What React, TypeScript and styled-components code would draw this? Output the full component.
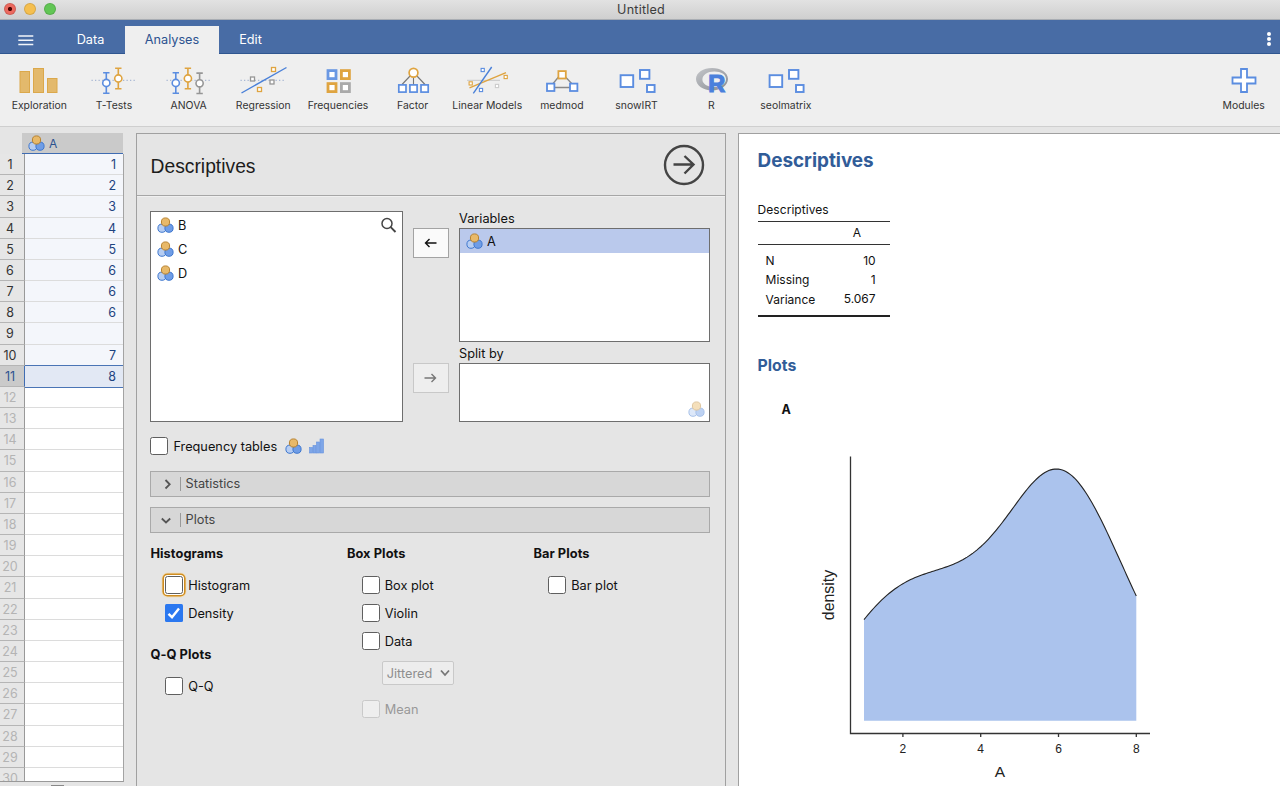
import React from "react";
import styled, { createGlobalStyle, css } from "styled-components";

const BLUE = "#5b8de0";
const GOLD = "#dfa440";
const GREY = "#969696";

const Global = createGlobalStyle`
  * { box-sizing: border-box; }
  html, body { margin: 0; padding: 0; overflow: hidden; }
  body { font-family: Inter, "Liberation Sans", sans-serif; font-size: 13px; color: #111; }
  svg { display: block; flex: none; }
`;

const Window = styled.div`
  width: 1280px;
  height: 786px;
  display: flex;
  flex-direction: column;
  overflow: hidden;
  background: #e5e5e5;
`;

const TitleBar = styled.header`
  height: 20px;
  flex: none;
  display: grid;
  grid-template-columns: 100px 1fr 98px;
  background: linear-gradient(#e2e2e2, #cfcfcf);
  border-bottom: 1px solid #a9adb3;
`;
const Lights = styled.div`
  display: flex;
  gap: 8px;
  padding: 3px 0 0 4px;
`;
const Light = styled.span<{ $fill: string; $dot?: boolean }>`
  width: 12px;
  height: 12px;
  border-radius: 50%;
  border: 1px solid rgba(0, 0, 0, 0.12);
  background: ${(p) => (p.$dot ? `radial-gradient(circle, #4a0704 0 1.8px, ${p.$fill} 2.4px)` : p.$fill)};
`;
const WindowTitle = styled.div`
  text-align: center;
  line-height: 19px;
  font-size: 12.6px;
  letter-spacing: 0.2px;
  color: #3c3c3c;
`;

const TabBar = styled.nav`
  height: 34px;
  flex: none;
  display: flex;
  align-items: stretch;
  background: #486ca5;
  box-shadow: inset 0 -1px #2f5690;
`;
const MenuButton = styled.div`
  width: 56px;
  padding: 15px 0 0 18px;
`;
const Tab = styled.div<{ $width: number; $active?: boolean }>`
  width: ${(p) => p.$width}px;
  margin-top: 6px;
  text-align: center;
  line-height: 28px;
  font-size: 12.7px;
  color: #fff;
  ${(p) =>
    p.$active &&
    css`
      background: #efefef;
      color: #2d5390;
    `}
`;
const Kebab = styled.div`
  margin: 12px 9px 0 auto;
  display: flex;
  flex-direction: column;
  gap: 1px;
  span {
    width: 4px;
    height: 4px;
    border-radius: 50%;
    background: #fff;
  }
`;

const Ribbon = styled.div`
  height: 73px;
  flex: none;
  display: flex;
  padding: 10px 0 0 2px;
  background: #efefef;
  border-bottom: 1px solid #cfcfcf;
`;
const RibbonItem = styled.div<{ $end?: boolean }>`
  width: 74.67px;
  display: flex;
  flex-direction: column;
  align-items: center;
  font-size: 10.4px;
  line-height: 16px;
  letter-spacing: 0.03px;
  white-space: nowrap;
  color: #333;
  ${(p) =>
    p.$end &&
    css`
      margin-left: auto;
      margin-right: -1px;
    `}
`;

const Main = styled.main`
  flex: 1;
  min-height: 0;
  display: flex;
`;

const Sheet = styled.section`
  width: 136px;
  flex: none;
  display: flex;
  flex-direction: column;
  padding-top: 6px;
`;
const ColumnHead = styled.div`
  margin-left: 22px;
  width: 101px;
  height: 21px;
  flex: none;
  display: flex;
  align-items: center;
  gap: 4px;
  padding-left: 6px;
  background: #cacaca;
  border-bottom: 1px solid #3f6cb2;
  color: #2d5390;
  font-size: 12px;
`;
const Rows = styled.div`
  width: 124px;
  height: 628px;
  flex: none;
  overflow: hidden;
  border-right: 1px solid #a3a3a3;
  border-bottom: 1px solid #999;
`;
type CellState = "filled" | "selected" | "empty";
const Row = styled.div`
  height: 21.18px;
  display: flex;
`;
const RowNumber = styled.div<{ $state: CellState }>`
  width: 25px;
  padding-right: 4px;
  border-right: 1px solid #999;
  border-bottom: 1px solid #b5b5b5;
  text-align: center;
  line-height: 22px;
  font-size: 12.5px;
  background: ${(p) => (p.$state === "selected" ? "#cacaca" : "#e6e6e6")};
  color: ${(p) => ({ filled: "#333", selected: "#2d5390", empty: "#b4b4b4" })[p.$state]};
  border-right-color: ${(p) => (p.$state === "selected" ? "#3f6cb2" : "#999")};
`;
const Cell = styled.div<{ $state: CellState }>`
  flex: 1;
  padding-right: 7px;
  text-align: right;
  line-height: 22px;
  font-size: 12.5px;
  color: #1d4380;
  border-bottom: 1px solid #dcdcdc;
  background: ${(p) => ({ filled: "#f4f6fb", selected: "#e2e8f4", empty: "#fff" })[p.$state]};
  ${(p) =>
    p.$state === "selected" &&
    css`
      position: relative;
      z-index: 1;
      border-bottom: 0;
      box-shadow: 0 -1px #4a74b5, 0 1px #4a74b5;
    `}
`;
const ScrollThumb = styled.div`
  margin: 3px 0 0 51px;
  width: 13px;
  height: 2px;
  background: #888;
`;

const Options = styled.section`
  width: 590px;
  flex: none;
  margin-top: 6px;
  border: 1px solid #a0a0a0;
  border-bottom: 0;
`;
const OptionsHead = styled.div`
  height: 62px;
  display: flex;
  justify-content: space-between;
  align-items: center;
  padding: 1px 20px 0 13.5px;
  border-bottom: 1px solid #a6a6a6;
  box-shadow: 0 1px #f0f0f0;
`;
const OptionsTitle = styled.h1`
  margin: 0;
  padding-top: 3px;
  font: 400 19.3px "Liberation Sans", sans-serif;
  color: #1c1c1c;
`;
const Form = styled.div`
  padding: 15px 15px 0 13px;
  font-size: 12.75px;
`;
const Supplier = styled.div`
  height: 211px;
  display: grid;
  grid-template-columns: 253px 36px 251px;
  column-gap: 10px;
`;
const ListBox = styled.div<{ $height: number; $pad?: number }>`
  height: ${(p) => p.$height}px;
  padding-top: ${(p) => p.$pad ?? 0}px;
  border: 1px solid #6e6e6e;
  background: #fff;
  position: relative;
`;
const Variable = styled.div<{ $selected?: boolean }>`
  height: 24.2px;
  display: flex;
  align-items: center;
  gap: 4.5px;
  padding-left: 5.5px;
  background: ${(p) => (p.$selected ? "#bac9ec" : "transparent")};
`;
const SearchCorner = styled.div`
  position: absolute;
  top: 5px;
  right: 5px;
`;
const TypeCorner = styled.div`
  position: absolute;
  right: 4px;
  bottom: 3px;
  opacity: 0.45;
`;
const ButtonColumn = styled.div`
  display: flex;
  flex-direction: column;
  gap: 105px;
  padding-top: 17px;
`;
const MoveButton = styled.div<{ $disabled?: boolean }>`
  height: 30px;
  display: flex;
  align-items: center;
  justify-content: center;
  border: 1px solid ${(p) => (p.$disabled ? "#c8c8c8" : "#a3a3a3")};
  background: ${(p) => (p.$disabled ? "#eee" : "#fafafa")};
  color: ${(p) => (p.$disabled ? "#777" : "#111")};
`;
const Targets = styled.div`
  display: flex;
  flex-direction: column;
`;
const TargetLabel = styled.div<{ $height: number }>`
  height: ${(p) => p.$height}px;
  line-height: ${(p) => (p.$height > 18 ? 23 : 15)}px;
`;

const CheckRow = styled.label<{ $disabled?: boolean }>`
  height: 28.1px;
  display: flex;
  align-items: center;
  gap: 5px;
  color: ${(p) => (p.$disabled ? "#999" : "#111")};
`;
const CheckBox = styled.span<{ $checked?: boolean; $disabled?: boolean; $focus?: boolean }>`
  width: 18px;
  height: 18px;
  flex: none;
  border-radius: 2.5px;
  border: 1px solid ${(p) => (p.$disabled ? "#c9c9c9" : "#5f5f5f")};
  background: ${(p) => (p.$disabled ? "#eee" : "#fff")};
  ${(p) =>
    p.$checked &&
    css`
      border: 0;
      border-radius: 1.5px;
      background: #2b78f0;
    `}
  ${(p) =>
    p.$focus &&
    css`
      box-shadow: 0 0 0 1px #fff, 0 0 0 2.6px #cf8d20, 0 0 0 3.4px #f1dfbd;
    `}
`;
const FrequencyRow = styled.div`
  height: 49px;
  display: flex;
  align-items: center;
  padding: 0 0 1px 0.4px;
  gap: 7.4px;
`;
const Collapser = styled.div`
  height: 26px;
  margin-bottom: 10px;
  width: 560px;
  display: flex;
  align-items: center;
  padding-left: 9px;
  gap: 6px;
  border: 1px solid #a9a9a9;
  background: #d7d7d7;
  color: #444;
`;
const CollapserText = styled.span`
  border-left: 1.5px solid #999;
  padding-left: 4.5px;
  line-height: 14px;
  margin-bottom: 1px;
`;
const PlotOptions = styled.div`
  display: grid;
  grid-template-columns: 196.5px 186.5px 1fr;
  padding: 2px 0 0 0.4px;
`;
const Group = styled.div`
  padding-left: 14.8px;
`;
const GroupTitle = styled.h2`
  margin: 0;
  height: 26px;
  line-height: 16px;
  font-size: 12.8px;
  letter-spacing: 0.08px;
  font-weight: 700;
  padding-top: 1px;
`;
const GroupTitleSpaced = styled(GroupTitle)`
  margin-top: 19px;
`;
const Select = styled.div`
  margin: 6px 0 10px 20px;
  width: 72px;
  height: 24px;
  display: flex;
  align-items: center;
  justify-content: space-between;
  padding: 0 3px 0 4px;
  border: 1px solid #c9c9c9;
  border-radius: 2px;
  background: #ededed;
  color: #8e8e8e;
`;

const Results = styled.section`
  flex: 1;
  min-width: 0;
  margin: 6px 0 0 12px;
  padding: 15px 0 0 18.6px;
  border: solid #a0a0a0;
  border-width: 1px 0 0 1px;
  background: #fff;
`;
const ResultsTitle = styled.h1`
  margin: 0;
  line-height: 24px;
  font-size: 18.9px;
  font-weight: 700;
  letter-spacing: -0.02px;
  color: #315c98;
`;
const ResultTable = styled.table`
  margin-top: 30px;
  width: 132px;
  border-collapse: collapse;
  font-size: 12px;
  line-height: 14px;
  caption {
    text-align: left;
    height: 18px;
    line-height: 14px;
    letter-spacing: 0.05px;
  }
  thead th {
    height: 23px;
    font-weight: 400;
    border-top: 1.4px solid #333;
    border-bottom: 1px solid #333;
    padding: 0 7px 0 0;
  }
  tbody th {
    text-align: left;
    font-weight: 400;
    padding: 2.6px 0 2.6px 8px;
  }
  tbody td {
    text-align: right;
    padding: 2px 14px 3.2px 0;
  }
  tbody tr:first-child > * {
    padding-top: 8.6px;
  }
  tbody tr:last-child > * {
    padding-bottom: 8.4px;
  }
  tbody {
    border-bottom: 2px solid #222;
  }
`;
const PlotsTitle = styled.h2`
  margin: 39px 0 0;
  line-height: 20px;
  font-size: 15.8px;
  font-weight: 700;
  color: #315c98;
`;
const PlotName = styled.h3`
  margin: 25.5px 0 22.5px 24px;
  line-height: 18px;
  font-size: 12.5px;
  font-weight: 700;
`;
const Chart = styled.svg`
  margin: -2px 0 0 42.4px;
  text {
    font-family: "Liberation Sans", sans-serif;
    text-anchor: middle;
    fill: #222;
  }
`;

const NominalIcon = () => (
  <svg width="17" height="17" viewBox="0 0 17 17" strokeWidth="1">
    <circle cx="5" cy="11.2" r="4.1" fill="#b6cdf2" stroke="#3f78cf" />
    <circle cx="12" cy="11.2" r="4.1" fill="#6f9de6" stroke="#3f78cf" />
    <circle cx="8.5" cy="5" r="4.1" fill="#e8b969" stroke="#b8822e" />
  </svg>
);
const OrdinalIcon = () => (
  <svg width="15" height="16" viewBox="0 0 15 16" fill="#7ea6e8" stroke="#6592de" strokeWidth=".6">
    <rect x=".5" y="9.5" width="3" height="5.5" />
    <rect x="4" y="7.5" width="3" height="7.5" />
    <rect x="7.5" y="4" width="3" height="11" />
    <rect x="11" y="1" width="3.5" height="14" />
  </svg>
);

const Square = ({ x, y, s, w = 1.3, c }: { x: number; y: number; s: number; w?: number; c: string }) => (
  <rect x={x - s / 2} y={y - s / 2} width={s} height={s} fill="#fff" stroke={c} strokeWidth={w} />
);
const Whisker = ({ x, y, c }: { x: number; y: number; c: string }) => (
  <g stroke={c} strokeWidth="1.6" fill="#fff">
    <path d={`M${x} ${y - 10.2}V${y + 10.2}M${x - 3.2} ${y - 10.2}h6.4M${x - 3.2} ${y + 10.2}h6.4`} />
    <circle cx={x} cy={y} r="3.6" />
  </g>
);
const Dotted = () => <path d="M2.5 16.4H47.5" stroke="#a9b8d4" strokeWidth="1.2" strokeDasharray="1.3 2.2" />;
const Scattered = () => (
  <g fill="#fff" stroke={BLUE} strokeWidth="1.9">
    <rect x="8.6" y="11.2" width="12.6" height="11.8" />
    <rect x="28" y="6" width="9.4" height="8.8" />
    <rect x="35" y="21" width="7.6" height="7" />
  </g>
);

const icons: Record<string, React.ReactNode> = {
  Exploration: (
    <g fill="#e3b96c" stroke="#dba84b">
      <rect x="6" y="7.5" width="9.5" height="21" />
      <rect x="19.5" y="4.5" width="10" height="24" />
      <rect x="33.5" y="14.5" width="9.5" height="14" />
    </g>
  ),
  "T-Tests": (
    <>
      <Dotted />
      <Whisker x={17.3} y={19} c={BLUE} />
      <Whisker x={29.3} y={14.5} c={GOLD} />
    </>
  ),
  ANOVA: (
    <>
      <Dotted />
      <Whisker x={11.8} y={19} c={BLUE} />
      <Whisker x={23.9} y={14.5} c={GOLD} />
      <Whisker x={35.6} y={19.3} c={GREY} />
    </>
  ),
  Regression: (
    <>
      <Dotted />
      <path d="M3.5 29L48.5 3.5" stroke="#4a80d8" strokeWidth="1.4" />
      <Square x={35.5} y={5.5} s={4} c={GOLD} />
      <Square x={14.5} y={15} s={4} c={GREY} />
      <Square x={34} y={18} s={4} c={GREY} />
      <Square x={21.5} y={25.5} s={4} c={GOLD} />
    </>
  ),
  Frequencies: (
    <>
      <Square x={19} y={10.6} s={8} w={2.8} c="#6a98e3" />
      <Square x={32.4} y={10.6} s={8} w={2.8} c={GOLD} />
      <Square x={19} y={23.6} s={8} w={2.8} c={GOLD} />
      <Square x={32.4} y={23.6} s={8} w={2.8} c="#a9a9a9" />
    </>
  ),
  Factor: (
    <>
      <path d="M22.5 11.5L14 20.5M25.5 12V21M28.5 11.5L37 20.5" stroke="#777" strokeWidth="1.1" />
      <circle cx="25.5" cy="8.7" r="4.4" fill="#fff" stroke={GOLD} strokeWidth="1.7" />
      <Square x={14.4} y={24.5} s={7.2} w={1.7} c={BLUE} />
      <Square x={25.5} y={24.5} s={7.2} w={1.7} c={BLUE} />
      <Square x={36.6} y={24.5} s={7.2} w={1.7} c={BLUE} />
    </>
  ),
  "Linear Models": (
    <>
      <path d="M5 16.3H38" stroke="#cfcfcf" strokeWidth="1.2" />
      <Square x={20.7} y={6} s={3.2} w={1.1} c={BLUE} />
      <Square x={8.7} y={19.4} s={3.2} w={1.1} c={GOLD} />
      <Square x={43.7} y={13} s={3.2} w={1.1} c={GOLD} />
      <Square x={19} y={26} s={3.2} w={1.1} c={BLUE} />
      <Square x={35} y={22} s={3.2} w={1.1} c="#ccc" />
      <path d="M7.5 23.8L44 8.6" stroke={GOLD} strokeWidth="1.4" />
      <path d="M11.3 29.4L29.7 3" stroke="#4a80d8" strokeWidth="1.4" />
    </>
  ),
  medmod: (
    <>
      <path d="M21.5 13L14 22M28.5 13L37 22M14 23.5H37" stroke="#888" strokeWidth="1.3" />
      <Square x={25.1} y={10.8} s={7.4} w={1.8} c={GOLD} />
      <Square x={13.7} y={23.3} s={7.4} w={1.8} c={BLUE} />
      <Square x={36.7} y={23.3} s={7.4} w={1.8} c={BLUE} />
    </>
  ),
  snowIRT: <Scattered />,
  R: (
    <>
      <defs>
        <linearGradient id="ring" x1="0" y1="0" x2="1" y2="1">
          <stop offset="0" stopColor="#c4c6ca" />
          <stop offset="1" stopColor="#898c92" />
        </linearGradient>
      </defs>
      <path
        fill="url(#ring)"
        fillRule="evenodd"
        d="M26 4C34.5 4 42 8.5 42 15S34.5 26.5 26 26.5 10 21.5 10 15 17.5 4 26 4ZM28.3 7.6C21.5 7.6 16.4 11 16.4 15.6S21.5 23 28.3 23 40 20 40 15.2 35.2 7.6 28.3 7.6Z"
      />
      <text x="22.3" y="28.2" fontFamily="Liberation Sans, sans-serif" fontWeight="700" fontSize="23.5" fill="#4a80dc" stroke="#4a80dc" strokeWidth="1.2">
        R
      </text>
    </>
  ),
  seolmatrix: <Scattered />,
  Modules: (
    <path d="M22 5h6v8.5h8.5v6H28v8.5h-6v-8.5h-8.5v-6H22z" fill="#fff" stroke={BLUE} strokeWidth="1.8" />
  ),
};
const analyses = [
  "Exploration",
  "T-Tests",
  "ANOVA",
  "Regression",
  "Frequencies",
  "Factor",
  "Linear Models",
  "medmod",
  "snowIRT",
  "R",
  "seolmatrix",
];

const RibbonButton = ({ name, end }: { name: string; end?: boolean }) => (
  <RibbonItem $end={end}>
    <svg width="50" height="34" viewBox="0 0 50 34">
      {icons[name]}
    </svg>
    {name}
  </RibbonItem>
);

const values = ["1", "2", "3", "4", "5", "6", "6", "6", "", "7", "8"];
const rowState = (i: number): CellState => (i === 10 ? "selected" : i < 10 ? "filled" : "empty");

type CheckProps = { label: string; checked?: boolean; disabled?: boolean; focus?: boolean };
const Check = ({ label, checked, disabled, focus }: CheckProps) => (
  <CheckRow $disabled={disabled}>
    <CheckBox $checked={checked} $disabled={disabled} $focus={focus}>
      {checked && (
        <svg width="18" height="18" viewBox="0 0 18 18">
          <path d="M3.5 9.8L7 13.2L14 4.5" fill="none" stroke="#fff" strokeWidth="2.4" />
        </svg>
      )}
    </CheckBox>
    {label}
  </CheckRow>
);

const Arrow = ({ left }: { left?: boolean }) => (
  <svg width="14" height="12" viewBox="0 0 14 12" fill="none" stroke="currentColor" strokeWidth="1.4">
    <path d={left ? "M12.5 6H1.5M5.5 2L1.5 6l4 4" : "M.5 6h11M7.5 2l4 4-4 4"} />
  </svg>
);
const Chevron = ({ down }: { down?: boolean }) => (
  <svg width="14" height="14" viewBox="0 0 14 14" fill="none" stroke="#555" strokeWidth="1.8">
    <path d={down ? "M1.8 5.5L6 9.5L10.2 5.5" : "M5.5 3L9.7 7.3L5.5 11.5"} />
  </svg>
);

/* Gaussian kernel density of the column, scaled so that its mode reaches the top of the plot */
const BANDWIDTH = 1.165;
const numbers = values.filter(Boolean).map(Number);
const density = (x: number) =>
  numbers.reduce((sum, v) => sum + Math.exp(-((x - v) ** 2) / (2 * BANDWIDTH ** 2)), 0);
const grid = Array.from({ length: 141 }, (_, i) => 1 + i * 0.05);
const mode = Math.max(...grid.map(density));
const px = (x: number) => 64 + (x - 1) * 38.9;
const py = (d: number) => 280.7 - (d / mode) * 251.7;
const outline = "M" + grid.map((x) => `${px(x).toFixed(2)} ${py(density(x)).toFixed(2)}`).join("L");

const DensityPlot = () => (
  <Chart width="370" height="350" viewBox="0 0 370 350">
    <path d={`${outline}V280.7H64Z`} fill="#abc3ed" />
    <path d={outline} fill="none" stroke="#222" strokeWidth="1.1" />
    <path d="M50.5 16.5V293.5H350" fill="none" stroke="#333" strokeWidth="1.3" />
    {[2, 4, 6, 8].map((t) => (
      <g key={t}>
        <path d={`M${px(t)} 293.5v3.5`} stroke="#333" strokeWidth="1.3" />
        <text x={px(t)} y="312.7" fontSize="12">
          {t}
        </text>
      </g>
    ))}
    <text x="200" y="337.3" fontSize="15.5">
      A
    </text>
    <text transform="translate(34 155) rotate(-90)" fontSize="15.9">
      density
    </text>
  </Chart>
);

export default function App() {
  return (
    <Window>
      <Global />
      <TitleBar>
        <Lights>
          <Light $fill="#ec6a5f" $dot />
          <Light $fill="#f5bf4f" />
          <Light $fill="#62c655" />
        </Lights>
        <WindowTitle>Untitled</WindowTitle>
      </TitleBar>
      <TabBar>
        <MenuButton>
          <svg width="16" height="11" viewBox="0 0 16 11" stroke="#f2f5fa" strokeWidth="1.5">
            <path d="M.3 1H15.3M.3 5.2H15.3M.3 9.4H15.3" />
          </svg>
        </MenuButton>
        <Tab $width={69}>Data</Tab>
        <Tab $width={94} $active>
          Analyses
        </Tab>
        <Tab $width={63}>Edit</Tab>
        <Kebab>
          <span />
          <span />
          <span />
        </Kebab>
      </TabBar>
      <Ribbon>
        {analyses.map((a) => (
          <RibbonButton key={a} name={a} />
        ))}
        <RibbonButton name="Modules" end />
      </Ribbon>
      <Main>
        <Sheet>
          <ColumnHead>
            <NominalIcon />A
          </ColumnHead>
          <Rows>
            {Array.from({ length: 30 }, (_, i) => (
              <Row key={i}>
                <RowNumber $state={rowState(i)}>{i + 1}</RowNumber>
                <Cell $state={rowState(i)}>{values[i]}</Cell>
              </Row>
            ))}
          </Rows>
          <ScrollThumb />
        </Sheet>
        <Options>
          <OptionsHead>
            <OptionsTitle>Descriptives</OptionsTitle>
            <svg width="42" height="42" viewBox="0 0 42 42" fill="none" stroke="#444" strokeWidth="2.4">
              <circle cx="21" cy="21" r="19" />
              <path d="M10.5 20.5H30.5M21.5 12L30.5 20.5L21.5 29.5" />
            </svg>
          </OptionsHead>
          <Form>
            <Supplier>
              <ListBox $height={211} $pad={1}>
                {["B", "C", "D"].map((v) => (
                  <Variable key={v}>
                    <NominalIcon />
                    {v}
                  </Variable>
                ))}
                <SearchCorner>
                  <svg width="17" height="17" viewBox="0 0 17 17" fill="none" stroke="#444" strokeWidth="1.5">
                    <circle cx="7" cy="6.5" r="5" />
                    <path d="M10.7 10.2L15.5 15" strokeWidth="1.9" />
                  </svg>
                </SearchCorner>
              </ListBox>
              <ButtonColumn>
                <MoveButton>
                  <Arrow left />
                </MoveButton>
                <MoveButton $disabled>
                  <Arrow />
                </MoveButton>
              </ButtonColumn>
              <Targets>
                <TargetLabel $height={17}>Variables</TargetLabel>
                <ListBox $height={114}>
                  <Variable $selected>
                    <NominalIcon />A
                  </Variable>
                </ListBox>
                <TargetLabel $height={21}>Split by</TargetLabel>
                <ListBox $height={59}>
                  <TypeCorner>
                    <NominalIcon />
                  </TypeCorner>
                </ListBox>
              </Targets>
            </Supplier>
            <FrequencyRow>
              <Check label="Frequency tables" />
              <NominalIcon />
              <OrdinalIcon />
            </FrequencyRow>
            <Collapser>
              <Chevron />
              <CollapserText>Statistics</CollapserText>
            </Collapser>
            <Collapser>
              <Chevron down />
              <CollapserText>Plots</CollapserText>
            </Collapser>
            <PlotOptions>
              <div>
                <GroupTitle>Histograms</GroupTitle>
                <Group>
                  <Check label="Histogram" focus />
                  <Check label="Density" checked />
                </Group>
                <GroupTitleSpaced>Q-Q Plots</GroupTitleSpaced>
                <Group>
                  <Check label="Q-Q" />
                </Group>
              </div>
              <div>
                <GroupTitle>Box Plots</GroupTitle>
                <Group>
                  <Check label="Box plot" />
                  <Check label="Violin" />
                  <Check label="Data" />
                  <Select>
                    Jittered
                    <svg width="10" height="8" viewBox="0 0 10 8" fill="none" stroke="#777" strokeWidth="1.8">
                      <path d="M1 1.5L5 6L9 1.5" />
                    </svg>
                  </Select>
                  <Check label="Mean" disabled />
                </Group>
              </div>
              <div>
                <GroupTitle>Bar Plots</GroupTitle>
                <Group>
                  <Check label="Bar plot" />
                </Group>
              </div>
            </PlotOptions>
          </Form>
        </Options>
        <Results>
          <ResultsTitle>Descriptives</ResultsTitle>
          <ResultTable>
            <caption>Descriptives</caption>
            <thead>
              <tr>
                <th />
                <th>A</th>
              </tr>
            </thead>
            <tbody>
              <tr>
                <th>N</th>
                <td>10</td>
              </tr>
              <tr>
                <th>Missing</th>
                <td>1</td>
              </tr>
              <tr>
                <th>Variance</th>
                <td>5.067</td>
              </tr>
            </tbody>
          </ResultTable>
          <PlotsTitle>Plots</PlotsTitle>
          <PlotName>A</PlotName>
          <DensityPlot />
        </Results>
      </Main>
    </Window>
  );
}
